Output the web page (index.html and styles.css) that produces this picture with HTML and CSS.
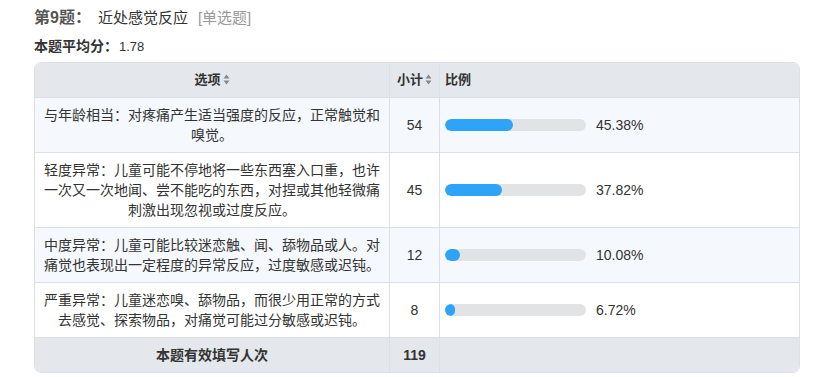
FILE: index.html
```html
<!DOCTYPE html>
<html lang="zh-CN">
<head>
<meta charset="utf-8">
<title>第9题</title>
<link rel="stylesheet" href="styles.css">
</head>
<body>
<div class="page">
  <div class="q-title">
    <span class="q-num">第9题：</span>
    <span class="q-text">近处感觉反应</span>
    <span class="q-type">[单选题]</span>
  </div>
  <div class="q-avg"><span class="avg-label">本题平均分：</span><span class="avg-val">1.78</span></div>
  <div class="table-wrap">
    <table class="result">
      <colgroup>
        <col class="c1"><col class="c2"><col class="c3">
      </colgroup>
      <thead>
        <tr>
          <th class="center">选项<span class="sort"><svg width="7" height="11" viewBox="0 0 7 11"><path d="M3.5 0.5 L6.5 4.5 L0.5 4.5 Z" fill="#888"/><path d="M3.5 10.5 L6.5 6.5 L0.5 6.5 Z" fill="#888"/></svg></span></th>
          <th class="center sm">小计<span class="sort"><svg width="7" height="11" viewBox="0 0 7 11"><path d="M3.5 0.5 L6.5 4.5 L0.5 4.5 Z" fill="#888"/><path d="M3.5 10.5 L6.5 6.5 L0.5 6.5 Z" fill="#888"/></svg></span></th>
          <th class="left">比例</th>
        </tr>
      </thead>
      <tbody>
        <tr class="alt">
          <td class="opt">与年龄相当：对疼痛产生适当强度的反应，正常触觉和嗅觉。</td>
          <td class="num">54</td>
          <td class="ratio"><div class="bar-row"><div class="track"><div class="fill" style="width:68px"></div></div><span class="pct">45.38%</span></div></td>
        </tr>
        <tr>
          <td class="opt">轻度异常：儿童可能不停地将一些东西塞入口重，也许一次又一次地闻、尝不能吃的东西，对捏或其他轻微痛刺激出现忽视或过度反应。</td>
          <td class="num">45</td>
          <td class="ratio"><div class="bar-row"><div class="track"><div class="fill" style="width:57px"></div></div><span class="pct">37.82%</span></div></td>
        </tr>
        <tr class="alt">
          <td class="opt">中度异常：儿童可能比较迷恋触、闻、舔物品或人。对痛觉也表现出一定程度的异常反应，过度敏感或迟钝。</td>
          <td class="num">12</td>
          <td class="ratio"><div class="bar-row"><div class="track"><div class="fill" style="width:15px"></div></div><span class="pct">10.08%</span></div></td>
        </tr>
        <tr>
          <td class="opt">严重异常：儿童迷恋嗅、舔物品，而很少用正常的方式去感觉、探索物品，对痛觉可能过分敏感或迟钝。</td>
          <td class="num">8</td>
          <td class="ratio"><div class="bar-row"><div class="track"><div class="fill" style="width:10px"></div></div><span class="pct">6.72%</span></div></td>
        </tr>
      </tbody>
      <tfoot>
        <tr>
          <td class="center bold">本题有效填写人次</td>
          <td class="center bold">119</td>
          <td></td>
        </tr>
      </tfoot>
    </table>
  </div>
</div>
</body>
</html>
```
FILE: styles.css
```css
* { box-sizing: border-box; }
html, body {
  margin: 0;
  padding: 0;
  background: #fff;
}
body {
  font-family: "Liberation Sans", "Noto Sans CJK SC", sans-serif;
  color: #333;
}
.page {
  padding: 8px 21px 0 34px;
}
.q-title {
  font-size: 15px;
  line-height: 20px;
  display: flex;
  align-items: baseline;
}
.q-num {
  font-weight: bold;
  color: #555;
  font-size: 16px;
  margin-right: 7px;
}
.q-text {
  color: #333;
  margin-right: 10px;
}
.q-type {
  color: #999;
}
.q-avg {
  margin-top: 8px;
  line-height: 20px;
}
.avg-label {
  font-weight: bold;
  color: #333;
  font-size: 14px;
}
.avg-val {
  color: #333;
  font-size: 13px;
  margin-left: 1px;
}
.table-wrap {
  margin-top: 5px;
  border: 1px solid #dcdfe6;
  border-radius: 7px;
  overflow: hidden;
  width: 766px;
}
.result {
  width: 100%;
  border-collapse: separate;
  border-spacing: 0;
  table-layout: fixed;
  font-size: 14px;
  line-height: 20px;
}
col.c1 { width: 355px; }
col.c2 { width: 50px; }
.result th, .result td {
  padding: 7px 10px;
  border-right: 1px solid #dcdfe6;
  border-bottom: 1px solid #dcdfe6;
  vertical-align: middle;
}
.result th:last-child, .result td:last-child { border-right: none; }
.result tfoot td { border-bottom: none; }
.result thead th {
  background: #e4e7ec;
  font-weight: bold;
  font-size: 13px;
  color: #333;
}
.result tfoot td {
  background: #e4e7ec;
  font-size: 14px;
}
.result th.sm { padding-left: 4px; padding-right: 4px; }
.result th.left { text-align: left; padding-left: 5px; }
.center { text-align: center; }
.bold { font-weight: bold; }
.sort {
  display: inline-block;
  margin-left: 2px;
  vertical-align: -1px;
}
.sort svg { display: block; }
tr.alt td { background: #f5f8fc; }
.result td.opt {
  text-align: center;
  color: #333;
  padding-left: 8px;
  padding-right: 8px;
}
.result td.num { text-align: center; padding-left: 4px; padding-right: 4px; }
.result td.ratio { padding-left: 5px; }
.bar-row {
  display: flex;
  align-items: center;
}
.track {
  width: 141px;
  height: 12px;
  border-radius: 6px;
  background: #e2e3e5;
  overflow: hidden;
  flex: none;
}
.fill {
  height: 100%;
  background: #2ea4f8;
  border-radius: 6px;
}
.pct {
  margin-left: 10px;
  font-size: 14px;
}
```
